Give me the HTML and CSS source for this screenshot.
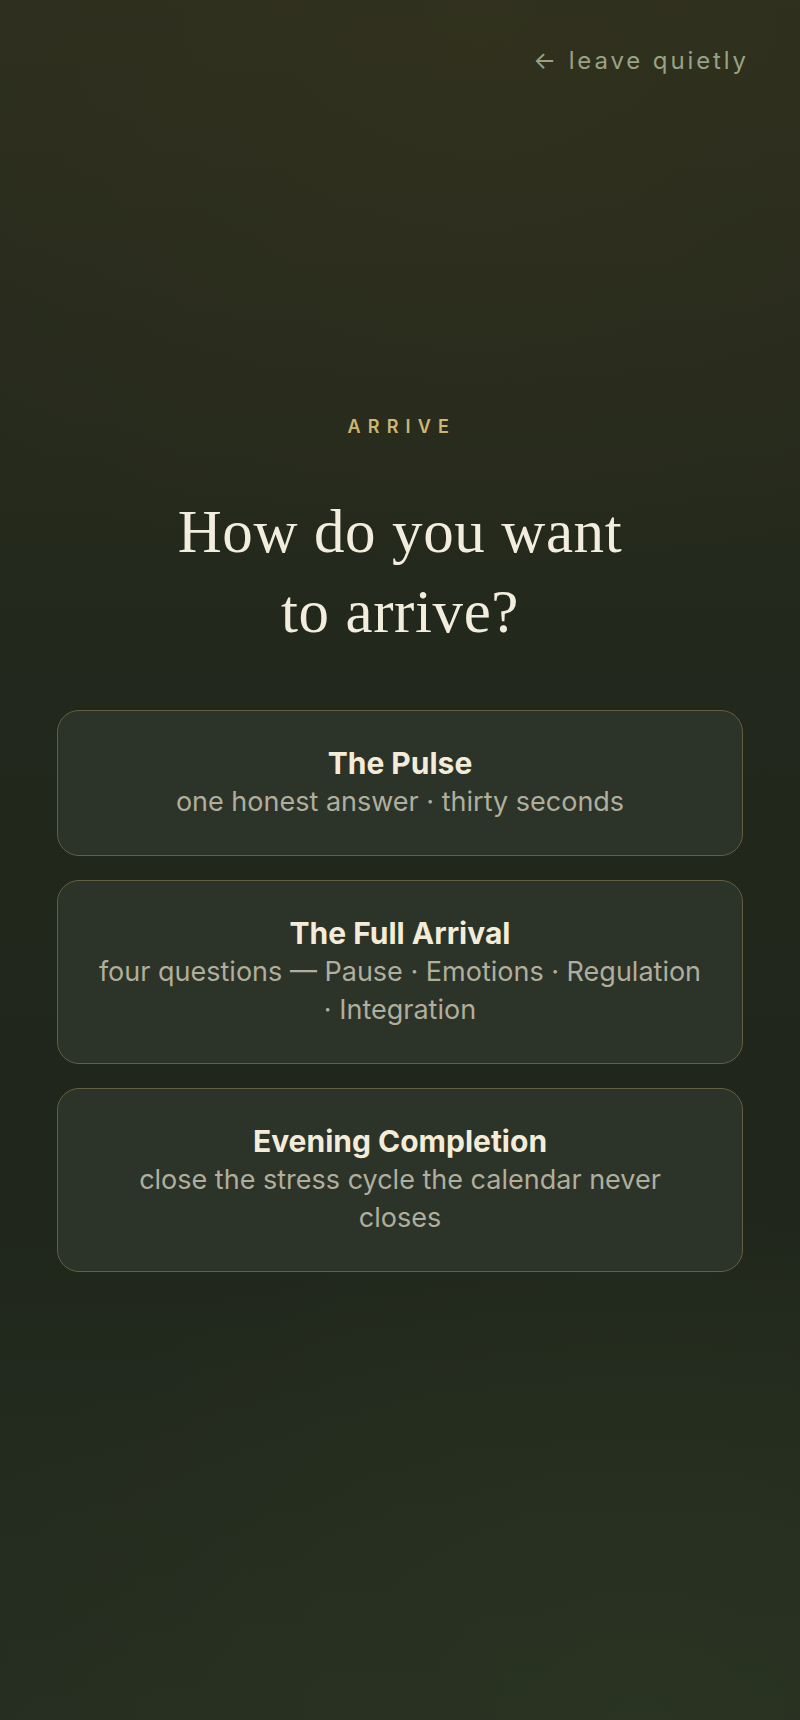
FILE: index.html
```html
<!DOCTYPE html>
<html lang="en">
<head>
<meta charset="UTF-8" />
<meta name="viewport" content="width=device-width, initial-scale=1" />
<title>Arrive</title>
<link rel="stylesheet" href="styles.css">
</head>
<body>

<div class="screen">
  <header class="topbar">
    <a class="leave" href="#">&larr; leave quietly</a>
  </header>

  <main class="arrive">
    <p class="eyebrow">ARRIVE</p>
    <h1 class="title">How do you want<br>to arrive?</h1>

    <!-- three ways in -->
    <div class="choices">
      <button class="choice" type="button">
        <span class="choice-name">The Pulse</span>
        <span class="choice-desc">one honest answer · thirty seconds</span>
      </button>
      <button class="choice" type="button">
        <span class="choice-name">The Full Arrival</span>
        <span class="choice-desc">four questions — Pause · Emotions · Regulation · Integration</span>
      </button>
      <button class="choice" type="button">
        <span class="choice-name">Evening Completion</span>
        <span class="choice-desc">close the stress cycle the calendar never closes</span>
      </button>
    </div>
  </main>
</div>

</body>
</html>
```

FILE: styles.css
```css
body {
  margin: 0; padding: 0;
  background: #21271c;
  color: #f3ecd9;
  font-family: Inter, "Noto Sans", sans-serif;
}
.screen {
  min-height: 1720px;
  background:
    radial-gradient(ellipse 90% 35% at 60% 0%, rgba(50, 49, 30, 0.8), rgba(50, 49, 30, 0) 100%),
    radial-gradient(ellipse 90% 30% at 80% 100%, rgba(42, 52, 34, 0.9), rgba(42, 52, 34, 0) 100%),
    linear-gradient(180deg, #2d2e1e 0%, #22281c 38%, #20261b 70%, #262e21 100%);
}
.topbar {
  padding: 43px 51px 0;
  text-align: right;
}
.leave {
  font-size: 24px;
  line-height: 36px;
  letter-spacing: 0.12em;
  color: #98a284;
  text-decoration: none;
}
.arrive {
  padding: 336px 57px 0;
  text-align: center;
}
.eyebrow {
  margin: 0;
  font-size: 18px;
  line-height: 24.5px;
  font-weight: 600;
  letter-spacing: 0.4em;
  padding-left: 0.2em;
  color: #cdb572;
}
.title {
  margin: 52px 0 58px;
  font-family: "Liberation Serif", "DejaVu Serif", serif;
  font-weight: 400;
  font-size: 61px;
  line-height: 80px;
  letter-spacing: 0.01em;
  color: #f3eddd;
}
.choices {
  display: flex;
  flex-direction: column;
  gap: 24px;
}
.choice {
  display: flex;
  flex-direction: column;
  align-items: center;
  gap: 2px;
  width: 100%;
  margin: 0;
  padding: 34px 39px;
  background: #2c3329;
  border: 1.5px solid #645f40;
  border-radius: 22px;
  font: inherit;
  color: inherit;
  text-align: center;
  cursor: pointer;
}
.choice-name {
  font-size: 30px;
  line-height: 36px;
  font-weight: 700;
  color: #f3ecd9;
}
.choice-desc {
  font-size: 27px;
  line-height: 38px;
  color: #b0ae9c;
}
```
